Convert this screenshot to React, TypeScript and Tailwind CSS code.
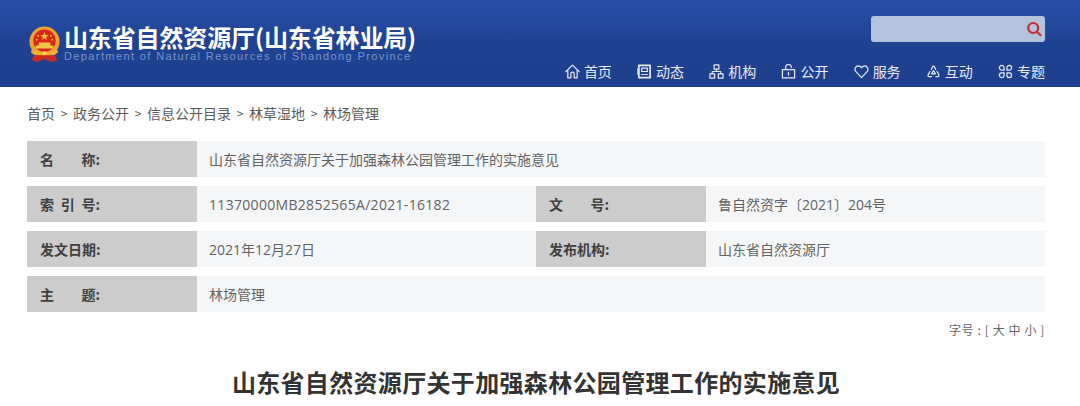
const sans = 'font-["Noto_Sans_CJK_SC","Liberation_Sans",sans-serif]';

function Emblem() {
  return (
    <svg width="33" height="37" viewBox="0 0 34 38" className="mt-[1px] shrink-0">
      <circle cx="17" cy="16" r="15.5" fill="#eda32f" />
      <circle cx="17" cy="15" r="11.5" fill="#d8261f" />
      <path d="M17 6l1.1 3.2h3.3l-2.7 2 1 3.2-2.7-2-2.7 2 1-3.2-2.7-2h3.3z" fill="#f7c52e" />
      <circle cx="10.5" cy="10" r="1" fill="#f7c52e" />
      <circle cx="23.5" cy="10" r="1" fill="#f7c52e" />
      <circle cx="9" cy="14" r="0.9" fill="#f7c52e" />
      <circle cx="25" cy="14" r="0.9" fill="#f7c52e" />
      <path d="M8 20h18v3H8zM11 17h12v3H11z" fill="#f3c545" />
      <path d="M4 24c4 4 22 4 26 0l1 3c-2 2-4 3-5 3H8c-1 0-3-1-5-3z" fill="#f0b02f" />
      <path d="M6 30h22l2 5c-3 2-6 2-8 1l-5-2-5 2c-2 1-5 1-8-1z" fill="#cf2a22" />
      <circle cx="17" cy="28" r="2" fill="#f7d25a" />
    </svg>
  );
}

const iconProps = {
  width: 15,
  height: 15,
  viewBox: '0 0 16 16',
  fill: 'none',
  stroke: 'currentColor',
  strokeWidth: 1.3,
  strokeLinejoin: 'round' as const,
  strokeLinecap: 'round' as const,
};

const navItems = [
  {
    label: '首页',
    icon: (
      <svg {...iconProps}>
        <path d="M.8 8.2L8 1.2l7.2 7M3 6.5V14.8H6.2V10.5a1.8 1.8 0 0 1 3.6 0V14.8H13V6.5" />
      </svg>
    ),
  },
  {
    label: '动态',
    icon: (
      <svg {...iconProps}>
        <path d="M2 1.5h12v13H2z" strokeWidth="1.8" />
        <path d="M5 4.5h6v3.5H5zM5 11.2h6M1 5v6" />
      </svg>
    ),
  },
  {
    label: '机构',
    icon: (
      <svg {...iconProps}>
        <path d="M5.5 1h5v4.5h-5zM1 10.5h5V15H1zM10 10.5h5V15h-5zM8 5.5V8M3.5 10.5V8h9v2.5" />
      </svg>
    ),
  },
  {
    label: '公开',
    icon: (
      <svg {...iconProps}>
        <path d="M1.5 6h13v8.8h-13zM5 6V3.5a3 3 0 0 1 6 0M8 9v2.8" />
      </svg>
    ),
  },
  {
    label: '服务',
    icon: (
      <svg {...iconProps}>
        <path d="M8 14.5L1.8 7.8C.2 5.5 1.8 2 4.5 2 6 2 7.2 2.8 8 4c.8-1.2 2-2 3.5-2 2.7 0 4.3 3.5 2.7 5.8z" />
      </svg>
    ),
  },
  {
    label: '互动',
    icon: (
      <svg {...iconProps}>
        <path d="M5.6 5.8L7 3c.5-.9 1.5-.9 2 0l1.4 2.8M11.8 8l1.9 3.6c.5 1-.1 1.9-1.2 1.9h-2M6 13.5H3.5c-1.1 0-1.7-.9-1.2-1.9L4.2 8" />
        <path d="M8 7l2 3.5H6z" />
      </svg>
    ),
  },
  {
    label: '专题',
    icon: (
      <svg {...iconProps}>
        <path d="M6.5 6.5V4A2.5 2.5 0 1 0 4 6.5zM9.5 6.5V4A2.5 2.5 0 1 1 12 6.500zM6.5 9.5V12A2.5 2.5 0 1 1 4 9.5zM9.5 9.5V12A2.5 2.5 0 1 0 12 9.5z" />
      </svg>
    ),
  },
];

function Header() {
  return (
    <header className="flex h-[87px] justify-between bg-gradient-to-b from-[#294ea8] via-[#1f4292] to-[#1e3f8d] pl-[28px] pr-[35px]">
      <div className="flex items-start gap-[3px] pt-[25px]">
        <Emblem />
        <div>
          <h1 className="text-[24px] leading-[24px] font-bold tracking-[-0.13px] whitespace-nowrap text-white">山东省自然资源厅(山东省林业局)</h1>
          <p className="mt-[2px] font-['Liberation_Sans',sans-serif] text-[11px] leading-[11px] tracking-[1.39px] whitespace-nowrap text-[#7a93cb]">
            Department of Natural Resources of Shandong Province
          </p>
        </div>
      </div>
      <div className="flex flex-col items-end">
        <div className="mt-[16px] flex h-[26px] w-[174px] items-center justify-end rounded-[3px] bg-[#b3c3de] pr-[3px]">
          <svg width="16" height="16" viewBox="0 0 16 16" fill="none" stroke="#c92a35" strokeWidth="2.2">
            <circle cx="7.2" cy="7" r="5" />
            <path d="M10.8 10.5l3.7 3.7" strokeLinecap="round" />
          </svg>
        </div>
        <nav className="mt-[20px] flex gap-[25.2px]">
          {navItems.map((item) => (
            <a key={item.label} className="flex h-[18px] items-center gap-[4px] text-[14px] leading-[18px] whitespace-nowrap text-[#e6ebf5]">
              {item.icon}
              {item.label}
            </a>
          ))}
        </nav>
      </div>
    </header>
  );
}

const crumbs = ['首页', '政务公开', '信息公开目录', '林草湿地', '林场管理'];

function Breadcrumb() {
  return (
    <div className="flex h-[54px] items-center gap-[5px] pb-[2px] text-[14px] text-[#5c5c5c]">
      {crumbs.map((c, i) => (
        <span key={c} className="flex items-center gap-[5px]">
          {i > 0 && <span className="w-[8px] text-center text-[12px]">&gt;</span>}
          {c}
        </span>
      ))}
    </div>
  );
}

function Label({ parts }: { parts: string[] }) {
  return (
    <div className="flex w-[170px] shrink-0 items-center bg-[#cccccc] pl-[13px]">
      <div className="flex w-[60px] justify-between text-[14px] font-bold whitespace-nowrap text-[#404040]">
        {parts.map((p) => (
          <span key={p}>{p}</span>
        ))}
      </div>
    </div>
  );
}

function Value({ children }: { children: React.ReactNode }) {
  return (
    <div className="flex flex-1 items-center bg-[#f5f6f8] pl-[12px] font-['Open_Sans','Noto_Sans_CJK_SC',sans-serif] text-[14px] text-[#636363]">
      {children}
    </div>
  );
}

function InfoTable() {
  return (
    <div className="flex flex-col gap-[9px]">
      <div className="flex h-[36px]">
        <Label parts={['名', '称:']} />
        <Value>山东省自然资源厅关于加强森林公园管理工作的实施意见</Value>
      </div>
      <div className="flex h-[36px]">
        <Label parts={['索', '引', '号:']} />
        <Value>
          <span className="tracking-[0.31px]">11370000MB2852565A/2021-16182</span>
        </Value>
        <Label parts={['文', '号:']} />
        <Value>鲁自然资字〔2021〕204号</Value>
      </div>
      <div className="flex h-[36px]">
        <Label parts={['发文日期:']} />
        <Value>2021年12月27日</Value>
        <Label parts={['发布机构:']} />
        <Value>山东省自然资源厅</Value>
      </div>
      <div className="flex h-[36px]">
        <Label parts={['主', '题:']} />
        <Value>林场管理</Value>
      </div>
    </div>
  );
}

export default function App() {
  return (
    <div className={`h-[406px] w-[1080px] overflow-hidden bg-white ${sans}`}>
      <Header />
      <main className="pl-[27px] pr-[35px]">
        <Breadcrumb />
        <InfoTable />
        <div className="mt-[9px] text-right text-[12px] leading-[18px] tracking-[0.6px] text-[#666666]">字号 : [ 大 中 小 ]</div>
        <h2 className="mt-[27px] text-center text-[24px] leading-[32px] font-bold tracking-[0.33px] text-[#333333]">
          山东省自然资源厅关于加强森林公园管理工作的实施意见
        </h2>
      </main>
    </div>
  );
}
